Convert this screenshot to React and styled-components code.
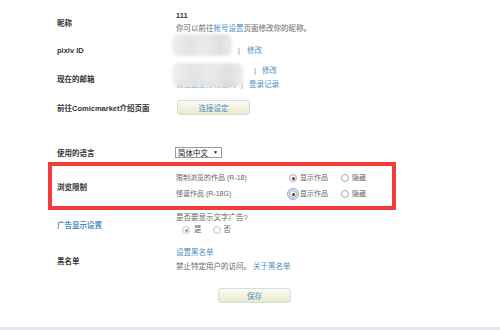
import React from 'react';
import styled, { createGlobalStyle } from 'styled-components';

const Global = createGlobalStyle`
  html, body { margin: 0; padding: 0; background: #fff; }
  body {
    font-family: "Liberation Sans", "Noto Sans CJK SC", sans-serif;
    font-size: 7.5px;
    color: #555;
  }
`;

const Page = styled.div`
  width: 500px;
  height: 330px;
  display: flex;
  flex-direction: column;
  overflow: hidden;
`;

const Content = styled.div`
  flex: 1;
  margin-left: 48px;
  width: 348px;
  padding-top: 8px;
`;

const Row = styled.div`
  display: grid;
  grid-template-columns: 119px 1fr;
  align-items: center;
  height: ${(p) => p.h}px;
  padding-left: 9px;
  box-sizing: border-box;
  margin-top: ${(p) => p.mt || 0}px;
`;

const AlertRow = styled(Row)`
  border: 4px solid #f23b3b;
  padding-left: 5px;
`;

const Label = styled.div`
  font-weight: bold;
  color: ${(p) => (p.link ? '#4a8fc4' : '#333')};
  font-size: 7.5px;
`;

const Value = styled.div`
  line-height: ${(p) => p.lh || 13}px;
  color: #666;
  position: relative;
`;

const Line = styled.div`
  display: flex;
  align-items: center;
  padding-left: ${(p) => p.pl || 0}px;
`;

const Strong = styled.div`
  font-weight: bold;
  color: #333;
`;

const Link = styled.span`
  color: #4a8fc4;
`;

const Pipe = styled.span`
  color: #888;
  margin-left: ${(p) => p.l || 0}px;
  margin-right: ${(p) => p.r || 6}px;
`;

const Blur = styled.div`
  position: absolute;
  left: ${(p) => p.x}px;
  top: ${(p) => p.y}px;
  width: ${(p) => p.w}px;
  height: ${(p) => p.hh}px;
  border-radius: 6px;
  background: linear-gradient(90deg, #efefef 0%, #e2e2e2 30%, #eaeaea 55%, #dedede 80%, #ececec 100%);
  filter: blur(1.5px);
  opacity: 0.95;
`;

const Button = styled.button`
  width: ${(p) => p.w || 73}px;
  height: 15px;
  margin-left: ${(p) => p.ml || 0}px;
  border: 1px solid #d4dde3;
  border-radius: 3px;
  background: linear-gradient(#fcfcf4, #ebe8c8);
  color: #4a8fc4;
  font-family: inherit;
  font-size: 7.5px;
  padding: 0;
  display: block;
`;

const Select = styled.div`
  width: 47px;
  height: 11px;
  border: 1px solid #9a9a9a;
  box-sizing: border-box;
  display: flex;
  align-items: center;
  justify-content: space-between;
  padding: 0 3px 0 2px;
  color: #222;
  font-size: 7.5px;
  background: #fff;
  margin-left: -1px;
  span:last-child { font-size: 5px; }
`;

const FilterGrid = styled.div`
  display: grid;
  grid-template-columns: 113px 52px auto;
  line-height: 16px;
  color: #666;
  font-size: 7px;
`;

const Option = styled.label`
  display: flex;
  align-items: center;
  gap: ${(p) => p.gap || 3}px;
  color: #666;
`;

const Radio = styled.span`
  width: 6px;
  height: 6px;
  border-radius: 50%;
  border: 1px solid ${(p) => (p.faint ? '#c8c8c8' : '#aaa')};
  background: radial-gradient(circle, #fff 40%, #e6e6e6 100%);
  position: relative;
  flex: none;
  outline: ${(p) => (p.focus ? '1px solid #8fb2e6' : 'none')};
  outline-offset: 1px;
  box-shadow: ${(p) => (p.focus ? '0 0 0 2px #d6e4f8' : 'none')};
  &::after {
    content: '';
    display: ${(p) => (p.checked ? 'block' : 'none')};
    position: absolute;
    left: 1.5px;
    top: 1.5px;
    width: 3px;
    height: 3px;
    border-radius: 50%;
    background: ${(p) => (p.faint ? '#999' : '#444')};
  }
`;

const AdOptions = styled.div`
  display: flex;
  padding-left: 6px;
  gap: 11px;
`;

const Bottom = styled.div`
  height: 3px;
  background: #e3e7ec;
`;

export default function App() {
  return (
    <Page>
      <Global />
      <Content>
        <Row h={28}>
          <Label>昵称</Label>
          <Value>
            <Strong>111</Strong>
            <div>你可以前往<Link>帐号设置</Link>页面修改你的昵称。</div>
          </Value>
        </Row>
        <Row h={28}>
          <Label>pixiv ID</Label>
          <Value>
            <Blur x={-4} y={-10} w={60} hh={22} />
            <Line pl={62}>
              <Pipe r={7}>|</Pipe>
              <Link>修改</Link>
            </Line>
          </Value>
        </Row>
        <Row h={28}>
          <Label>现在的邮箱</Label>
          <Value lh={14}>
            <Line pl={78}>
              <Pipe r={6}>|</Pipe>
              <Link>修改</Link>
            </Line>
            <Line>
              <Link>请往这里修改密码</Link>
              <Pipe l={5} r={6}>|</Pipe>
              <Link>登录记录</Link>
            </Line>
            <Blur x={-4} y={-1} w={71} hh={24} />
          </Value>
        </Row>
        <Row h={30}>
          <Label>前往Comicmarket介绍页面</Label>
          <Button ml={1}>连接设定</Button>
        </Row>
        <Row h={20} mt={20}>
          <Label>使用的语言</Label>
          <Select>
            <span>简体中文</span>
            <span>▼</span>
          </Select>
        </Row>
        <AlertRow h={48}>
          <Label>浏览限制</Label>
          <FilterGrid>
            <span>限制浏览的作品 (R-18)</span>
            <Option><Radio checked />显示作品</Option>
            <Option><Radio />隐藏</Option>
            <span>怪诞作品 (R-18G)</span>
            <Option><Radio checked focus />显示作品</Option>
            <Option><Radio />隐藏</Option>
          </FilterGrid>
        </AlertRow>
        <Row h={28}>
          <Label link>广告显示设置</Label>
          <Value lh={12}>
            <div>是否要显示文字广告?</div>
            <AdOptions>
              <Option gap={4}><Radio checked faint />是</Option>
              <Option gap={3}><Radio faint />否</Option>
            </AdOptions>
          </Value>
        </Row>
        <Row h={44}>
          <Label>黑名单</Label>
          <Value lh={14}>
            <div><Link>设置黑名单</Link></div>
            <div>禁止特定用户的访问。 <Link>关于黑名单</Link></div>
          </Value>
        </Row>
        <Row h={19} mt={4}>
          <span />
          <Button ml={42}>保存</Button>
        </Row>
      </Content>
      <Bottom />
    </Page>
  );
}
